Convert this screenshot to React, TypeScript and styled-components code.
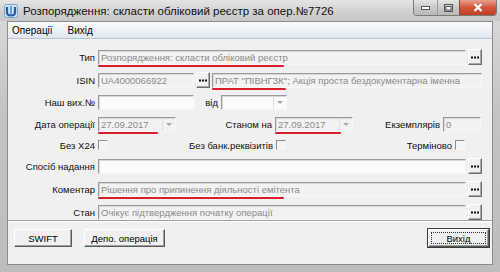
import styled, { createGlobalStyle } from 'styled-components';

const GlobalStyle = createGlobalStyle`
  html, body {
    margin: 0;
    padding: 0;
    background: #fff;
  }
  body {
    font-family: "Liberation Sans", Arial, sans-serif;
    font-size: 9.5px;
    color: #000;
  }
`;

const Window = styled.div`
  width: 500px;
  height: 272px;
  display: flex;
  flex-direction: column;
  background: linear-gradient(180deg, #dcdcdc 0%, #c4c4c4 40%, #bdbdbd 100%);
  box-sizing: border-box;
  overflow: hidden;
`;

const TitleBar = styled.div`
  height: 21px;
  display: flex;
  align-items: center;
  padding: 0 3px 0 4px;
  flex-shrink: 0;
  background: linear-gradient(180deg, #e4e4e4 0%, #cfcfcf 60%, #c8c8c8 100%);
`;

const TitleText = styled.span`
  margin-left: 5px;
  font-size: 11.5px;
  color: #111;
  flex: 1;
  white-space: nowrap;
`;

const Controls = styled.div`
  display: flex;
  align-self: flex-start;
  border: 1px solid #7a7a7a;
  border-top: none;
  border-radius: 0 0 4px 4px;
  overflow: hidden;
`;

const CtrlBtn = styled.div<{ $w: number; $close?: boolean }>`
  width: ${(p) => p.$w}px;
  height: 15px;
  display: flex;
  align-items: center;
  justify-content: center;
  background: ${(p) =>
    p.$close
      ? 'linear-gradient(180deg, #e8a08e 0%, #d2573b 50%, #c33d22 100%)'
      : 'linear-gradient(180deg, #e6e6e6 0%, #c9c9c9 50%, #b9b9b9 100%)'};
  border-left: ${(p) => (p.$close ? '1px solid #8a4a3c' : '1px solid #9a9a9a')};
  &:first-child {
    border-left: none;
  }
`;

const Frame = styled.div`
  flex: 1;
  display: flex;
  flex-direction: column;
  margin: 0 7px 7px 7px;
  border: 1px solid #8c8c8c;
  background: #f0f0f0;
  min-height: 0;
`;

const MenuBar = styled.div`
  height: 16px;
  display: flex;
  align-items: center;
  gap: 15px;
  padding-left: 4px;
  background: linear-gradient(180deg, #f9fafc 0%, #eef2f8 50%, #dfe6f0 100%);
  border-bottom: 1px solid #b8c2d0;
  font-size: 10px;
`;

const Form = styled.div`
  display: flex;
  flex-direction: column;
  gap: 7px;
  padding: 10px 10px 0 0;
  height: 182px;
  box-sizing: border-box;
  border-bottom: 1px solid #a0a0a0;
  box-shadow: 0 1px 0 #fff;
`;

const Row = styled.div`
  display: flex;
  align-items: center;
  height: 16px;
`;

const Label = styled.span<{ $w: number }>`
  width: ${(p) => p.$w}px;
  flex-shrink: 0;
  text-align: right;
  padding-right: 3px;
  box-sizing: border-box;
  white-space: nowrap;
  color: #111;
`;

const Field = styled.div<{ $w?: number; $white?: boolean; $mark?: number }>`
  position: relative;
  ${(p) => (p.$w ? `width: ${p.$w}px; flex-shrink: 0;` : 'flex: 1;')}
  height: 15px;
  box-sizing: border-box;
  border: 1px solid;
  border-color: #9b9b9b #f7f7f7 #f7f7f7 #9b9b9b;
  box-shadow: inset 1px 1px 0 #d8d8d8;
  background: ${(p) => (p.$white ? '#fbfbfb' : '#f2f2f2')};
  color: #8a8a8a;
  display: flex;
  align-items: center;
  padding-left: 2px;
  white-space: nowrap;
  overflow: visible;
  &::after {
    content: '';
    display: ${(p) => (p.$mark ? 'block' : 'none')};
    position: absolute;
    left: -1px;
    bottom: -3px;
    width: ${(p) => p.$mark || 0}px;
    height: 2px;
    border-radius: 1px;
    background: #d9202a;
  }
`;

const FieldText = styled.span`
  flex: 1;
  overflow: hidden;
`;

const Arrow = styled.span`
  width: 12px;
  height: 13px;
  display: flex;
  align-items: center;
  justify-content: center;
  border-left: 1px solid #e0e0e0;
  &::before {
    content: '';
    border-left: 3px solid transparent;
    border-right: 3px solid transparent;
    border-top: 3px solid #a8a8a8;
  }
`;

const DotsBtn = styled.div<{ $gap?: number }>`
  width: 14px;
  height: 16px;
  flex-shrink: 0;
  margin-left: ${(p) => p.$gap ?? 2}px;
  box-sizing: border-box;
  border: 1px solid;
  border-color: #fff #6e6e6e #6e6e6e #fff;
  box-shadow: inset -1px -1px 0 #a8a8a8;
  background: #f0f0f0;
  display: flex;
  align-items: center;
  justify-content: center;
`;

const Check = styled.div`
  width: 10px;
  height: 10px;
  flex-shrink: 0;
  box-sizing: border-box;
  border: 1px solid;
  border-color: #8e8e8e #f7f7f7 #f7f7f7 #8e8e8e;
  background: #f4f4f4;
`;

const Spacer = styled.span<{ $w: number }>`
  width: ${(p) => p.$w}px;
  flex-shrink: 0;
`;

const ButtonBar = styled.div`
  flex: 1;
  display: flex;
  align-items: flex-start;
  padding: 8px 3px 0 6px;
  gap: 12px;
`;

const Btn = styled.div<{ $w: number; $focus?: boolean }>`
  width: ${(p) => p.$w}px;
  height: 18px;
  box-sizing: border-box;
  border: 1px solid;
  border-color: #fff #5a5a5a #5a5a5a #fff;
  box-shadow: inset -1px -1px 0 #a0a0a0;
  background: #f0f0f0;
  display: flex;
  align-items: center;
  justify-content: center;
  position: relative;
  ${(p) => (p.$focus ? 'margin-left: auto; outline: 1px solid #3c3c3c;' : '')}
  &::after {
    content: '';
    display: ${(p) => (p.$focus ? 'block' : 'none')};
    position: absolute;
    inset: 2px;
    border: 1px dotted #333;
  }
`;

function AppIcon() {
  return (
    <svg width="14" height="14" viewBox="0 0 14 14">
      <rect x="0.5" y="0.5" width="13" height="13" rx="2" fill="#cfe3f5" stroke="#7aa6cc" />
      <path d="M3 3 V8.5 Q3 11.5 7 11.5 Q11 11.5 11 8.5 V3" fill="none" stroke="#1f5fa8" strokeWidth="2.2" />
      <path d="M7 2 V10" stroke="#4f8fd0" strokeWidth="1.6" />
    </svg>
  );
}

function Dots() {
  return (
    <DotsBtn>
      <svg width="8" height="3" viewBox="0 0 8 3">
        <rect x="0" y="0.5" width="2" height="2" fill="#111" />
        <rect x="3" y="0.5" width="2" height="2" fill="#111" />
        <rect x="6" y="0.5" width="2" height="2" fill="#111" />
      </svg>
    </DotsBtn>
  );
}

export default function App() {
  return (
    <>
      <GlobalStyle />
      <Window>
        <TitleBar>
          <AppIcon />
          <TitleText>Розпорядження: скласти обліковий реєстр за опер.№7726</TitleText>
          <Controls>
            <CtrlBtn $w={23}>
              <svg width="9" height="4" viewBox="0 0 9 4">
                <rect x="0.5" y="0.5" width="8" height="3" fill="#fff" stroke="#555" />
              </svg>
            </CtrlBtn>
            <CtrlBtn $w={21}>
              <svg width="9" height="8" viewBox="0 0 9 8">
                <rect x="0.5" y="0.5" width="8" height="7" fill="none" stroke="#555" />
                <rect x="2" y="2.5" width="5" height="3.5" fill="#fff" stroke="#555" strokeWidth="1" />
              </svg>
            </CtrlBtn>
            <CtrlBtn $w={36} $close>
              <svg width="10" height="9" viewBox="0 0 10 9">
                <path d="M1.5 1 L8.5 8 M8.5 1 L1.5 8" stroke="#fff" strokeWidth="2.2" />
              </svg>
            </CtrlBtn>
          </Controls>
        </TitleBar>
        <Frame>
          <MenuBar>
            <span>Операції</span>
            <span>Вихід</span>
          </MenuBar>
          <Form>
            <Row>
              <Label $w={90}>Тип</Label>
              <Field $mark={186}>
                <FieldText>Розпорядження: скласти обліковий реєстр</FieldText>
              </Field>
              <Dots />
            </Row>
            <Row>
              <Label $w={90}>ISIN</Label>
              <Field $w={96}>
                <FieldText>UA4000066922</FieldText>
              </Field>
              <Dots />
              <Spacer $w={2} />
              <Field $mark={74}>
                <FieldText>ПРАТ "ПІВНГЗК"; Акція проста бездокументарна іменна</FieldText>
              </Field>
            </Row>
            <Row>
              <Label $w={90}>Наш вих.№</Label>
              <Field $w={96} $white />
              <Label $w={27}>від</Label>
              <Field $w={66} $white>
                <FieldText />
                <Arrow />
              </Field>
            </Row>
            <Row>
              <Label $w={90}>Дата операції</Label>
              <Field $w={78} $mark={60}>
                <FieldText>27.09.2017</FieldText>
                <Arrow />
              </Field>
              <Label $w={99}>Станом на</Label>
              <Field $w={78} $mark={66}>
                <FieldText>27.09.2017</FieldText>
                <Arrow />
              </Field>
              <Label $w={90}>Екземплярів</Label>
              <Field $w={38}>
                <FieldText>0</FieldText>
              </Field>
            </Row>
            <Row>
              <Label $w={90}>Без Х24</Label>
              <Check />
              <Label $w={168}>Без банк.реквізитів</Label>
              <Check />
              <Label $w={169}>Терміново</Label>
              <Check />
            </Row>
            <Row>
              <Label $w={90}>Спосіб надання</Label>
              <Field $white />
              <Dots />
            </Row>
            <Row>
              <Label $w={90}>Коментар</Label>
              <Field $mark={186}>
                <FieldText>Рішення про припинення діяльності емітента</FieldText>
              </Field>
              <Dots />
            </Row>
            <Row>
              <Label $w={90}>Стан</Label>
              <Field>
                <FieldText>Очікує підтвердження початку операції</FieldText>
              </Field>
              <Dots />
            </Row>
          </Form>
          <ButtonBar>
            <Btn $w={58}>SWIFT</Btn>
            <Btn $w={81}>Депо. операція</Btn>
            <Btn $w={61} $focus>Вихід</Btn>
          </ButtonBar>
        </Frame>
      </Window>
    </>
  );
}
